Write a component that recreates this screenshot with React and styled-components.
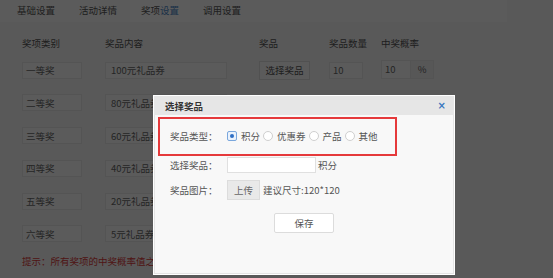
import React from "react";
import styled, { createGlobalStyle } from "styled-components";

const Global = createGlobalStyle`
  html, body {
    margin: 0;
    padding: 0;
    background: #f4f4f4;
  }
  body {
    font-family: "Noto Sans CJK SC", "Noto Sans", "Liberation Sans", sans-serif;
    font-size: 9.5px;
    color: #555;
  }
`;

const Page = styled.div`
  position: relative;
  width: 553px;
  height: 278px;
  overflow: hidden;
  background: #f4f4f4;
`;

const TabBar = styled.div`
  display: flex;
  width: 507px;
  height: 22px;
  background: #f9f9f9;
  padding-left: 6px;
  box-sizing: border-box;
`;

const Tab = styled.div`
  display: flex;
  align-items: center;
  padding: 0 11px;
  margin-right: 2px;
  line-height: 1;
  color: #555;
  background: ${(p) => (p.active ? "#fcfcfc" : "transparent")};
`;

const Accent = styled.span`
  color: #4a86c5;
`;

const Content = styled.div`
  padding: 12px 0 0 22px;
`;

const Grid = styled.div`
  display: grid;
  grid-template-columns: 60px 122px 60px 30px 52px;
  column-gap: 23px;
  grid-auto-rows: 17px;
  row-gap: ${(p) => p.gap || 0}px;
  margin-bottom: ${(p) => p.after || 0}px;
  white-space: nowrap;
  & > :nth-child(5n + 3) { margin-left: 9px; }
  & > :nth-child(5n + 4) { margin-left: -4px; }
  & > :nth-child(5n + 5) { margin-left: -5px; }
`;

const Head = styled.div`
  display: flex;
  align-items: center;
  color: #555;
`;

const Field = styled.div`
  display: flex;
  align-items: center;
  padding-left: ${(p) => (p.plain ? 3 : 5)}px;
  border: 1px solid #e6e6e6;
  background: #f8f8f8;
  color: #666;
  box-sizing: border-box;
`;

const GhostButton = styled.div`
  display: flex;
  align-items: center;
  justify-content: center;
  border: 1px solid #dedede;
  background: #f8f8f8;
  color: #555;
  height: 19px;
  margin-top: -1px;
  box-sizing: border-box;
`;

const Rate = styled.div`
  display: flex;
  height: 19px;
  margin-top: -2px;
`;

const RateInput = styled(Field)`
  width: 30px;
  padding-left: 3px;
`;

const Addon = styled.div`
  width: 22px;
  display: flex;
  align-items: center;
  justify-content: center;
  background: #eee;
  border: 1px solid #e6e6e6;
  border-left: none;
  color: #666;
`;

const Hint = styled.div`
  margin-top: 12px;
  color: #d83a3a;
`;

const Overlay = styled.div`
  position: absolute;
  inset: 0;
  background: rgba(0, 0, 0, 0.635);
`;

const Modal = styled.div`
  position: absolute;
  left: 153px;
  top: 95px;
  width: 302px;
  height: 180px;
  box-sizing: border-box;
  border: 1px solid #fff;
  background: #f8f8f8;
  box-shadow: 0 0 0 1px #e4e4e4 inset;
  display: flex;
  flex-direction: column;
`;

const ModalHead = styled.div`
  height: 19px;
  background: #e6e6e6;
  display: flex;
  align-items: center;
  justify-content: space-between;
  padding: 0 8px 0 11px;
  font-weight: bold;
  color: #333;
`;

const Close = styled.span`
  color: #3b78c0;
  font-size: 10px;
  font-weight: bold;
  font-family: "DejaVu Sans", sans-serif;
`;

const ModalBody = styled.div`
  padding: 2px 0 0 4px;
  display: flex;
  flex-direction: column;
`;

const Highlight = styled.div`
  width: 239px;
  height: 39px;
  box-sizing: border-box;
  border: 2px solid #e5393b;
  display: flex;
  align-items: center;
  padding: 0 0 2px 10px;
`;

const FormRow = styled.div`
  display: flex;
  align-items: center;
  padding-left: 12px;
  margin-top: ${(p) => p.top || 0}px;
`;

const Label = styled.div`
  width: 57px;
  color: #555;
`;

const Option = styled.label`
  display: flex;
  align-items: center;
  margin-right: 3px;
  color: #555;
`;

const Radio = styled.span`
  width: 10px;
  height: 10px;
  box-sizing: border-box;
  margin-right: 4px;
  border-radius: ${(p) => (p.checked ? "2px" : "50%")};
  border: 1px solid ${(p) => (p.checked ? "#7aa7dd" : "#cfcfcf")};
  background: ${(p) => (p.checked ? "#eaf2fc" : "#fff")};
  display: flex;
  align-items: center;
  justify-content: center;
  &::after {
    content: "";
    display: ${(p) => (p.checked ? "block" : "none")};
    width: 4px;
    height: 4px;
    border-radius: 50%;
    background: #2f6fc4;
  }
`;

const TextInput = styled.div`
  width: 89px;
  height: 16px;
  box-sizing: border-box;
  border: 1px solid #e0e0e0;
  background: #fff;
  margin-right: 2px;
`;

const Upload = styled.div`
  width: 33px;
  height: 20px;
  box-sizing: border-box;
  border: 1px solid #dcdcdc;
  background: #e9e9e9;
  display: flex;
  align-items: center;
  justify-content: center;
  color: #666;
  margin-right: 3px;
`;

const Footer = styled.div`
  display: flex;
  justify-content: center;
  margin-top: 13px;
  padding-right: 4px;
`;

const SaveButton = styled.div`
  width: 60px;
  height: 20px;
  box-sizing: border-box;
  border: 1px solid #dcdcdc;
  border-radius: 2px;
  background: #fff;
  display: flex;
  align-items: center;
  justify-content: center;
  color: #555;
`;

const tabs = ["基础设置", "活动详情", "奖项设置", "调用设置"];

const prizes = [
  ["一等奖", "100元礼品券"],
  ["二等奖", "80元礼品券"],
  ["三等奖", "60元礼品券"],
  ["四等奖", "40元礼品券"],
  ["五等奖", "20元礼品券"],
  ["六等奖", "5元礼品券"],
];

const types = ["积分", "优惠券", "产品", "其他"];

export default function App() {
  return (
    <Page>
      <Global />
      <TabBar>
        {tabs.map((t, i) => (
          <Tab key={t} active={i === 2}>
            {i === 2 ? (
              <>
                {t.slice(0, 2)}
                <Accent>{t.slice(2)}</Accent>
              </>
            ) : (
              t
            )}
          </Tab>
        ))}
      </TabBar>

      <Content>
        <Grid after={10.5}>
          <Head>奖项类别</Head>
          <Head>奖品内容</Head>
          <Head>奖品</Head>
          <Head>奖品数量</Head>
          <Head>中奖概率</Head>
        </Grid>
        <Grid gap={15.8}>
          {prizes.map(([level, content], i) => (
            <React.Fragment key={level}>
              <Field plain>{level}</Field>
              <Field>{content}</Field>
              {i === 0 ? <GhostButton>选择奖品</GhostButton> : <span />}
              {i === 0 ? <Field plain>10</Field> : <span />}
              {i === 0 ? (
                <Rate>
                  <RateInput>10</RateInput>
                  <Addon>%</Addon>
                </Rate>
              ) : (
                <span />
              )}
            </React.Fragment>
          ))}
        </Grid>
        <Hint>提示：所有奖项的中奖概率值之和必须小于等于100%</Hint>
      </Content>

      <Overlay />

      <Modal>
        <ModalHead>
          <span>选择奖品</span>
          <Close>×</Close>
        </ModalHead>
        <ModalBody>
          <Highlight>
            <Label>奖品类型：</Label>
            {types.map((t, i) => (
              <Option key={t}>
                <Radio checked={i === 0} />
                {t}
              </Option>
            ))}
          </Highlight>
          <FormRow top={1}>
            <Label>选择奖品：</Label>
            <TextInput />
            积分
          </FormRow>
          <FormRow top={7}>
            <Label>奖品图片：</Label>
            <Upload>上传</Upload>
            建议尺寸:120*120
          </FormRow>
          <Footer>
            <SaveButton>保存</SaveButton>
          </Footer>
        </ModalBody>
      </Modal>
    </Page>
  );
}
